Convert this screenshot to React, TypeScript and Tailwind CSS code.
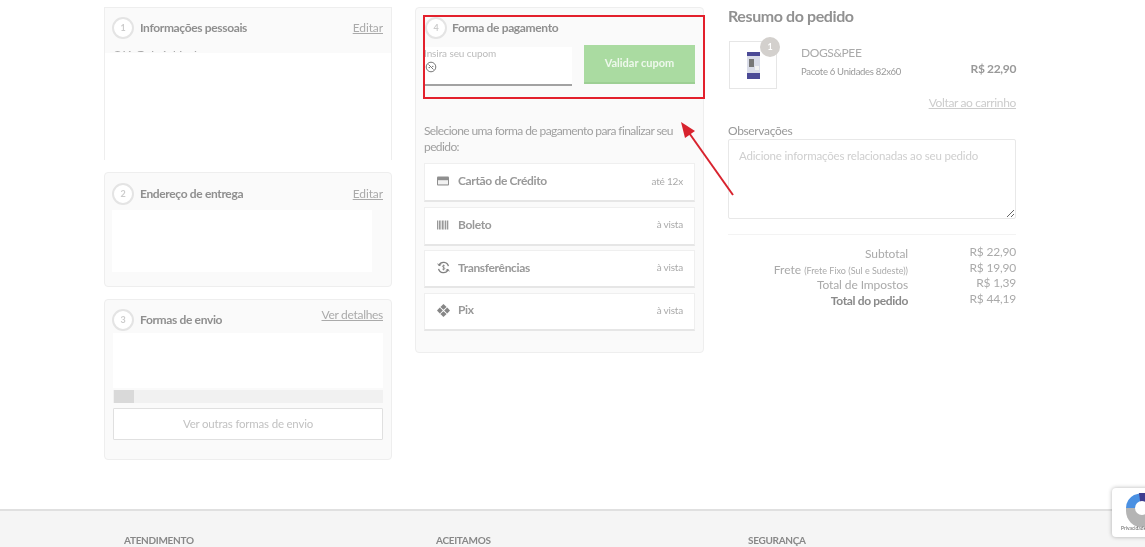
import React from "react";

const Step = ({ n }: { n: number }) => (
  <div className="flex h-[22px] w-[22px] shrink-0 items-center justify-center rounded-full border-2 border-[#e4e4e4] bg-white text-[9px] font-bold text-[#cccccc]">
    {n}
  </div>
);

const CardIcon = () => (
  <svg width="12" height="10" viewBox="0 0 12 10" className="shrink-0">
    <rect x="0" y="0.5" width="12" height="9" rx="1" fill="#8f8f8f" />
    <rect x="1" y="2" width="10" height="1.6" fill="#8f8f8f" />
    <rect x="1" y="4.2" width="10" height="4.2" fill="#f2f2f2" />
  </svg>
);
const BarcodeIcon = () => (
  <svg width="12" height="10" viewBox="0 0 12 10" className="shrink-0">
    {[0, 2, 3.5, 5, 6.5, 8, 10].map((x) => (
      <rect key={x} x={x} y="0.5" width={x === 3.5 || x === 6.5 ? 0.8 : 1.3} height="9" fill="#999" />
    ))}
  </svg>
);
const TransferIcon = () => (
  <svg width="13" height="13" viewBox="0 0 13 13" fill="none" className="shrink-0">
    <path d="M2 4.2A5 5 0 0 1 11.4 5.2M11 8.8A5 5 0 0 1 1.6 7.8" stroke="#808080" strokeWidth="1.3" />
    <path d="M0.8 2.6 2 4.8 4.2 3.6M12.2 10.4 11 8.2 8.8 9.4" stroke="#808080" strokeWidth="1" />
    <path d="M7.8 4.9C7.2 4.2 5.4 4.3 5.4 5.4c0 1.2 2.4.8 2.4 2.1 0 1.1-1.8 1.2-2.5.5M6.6 3.6v5.8" stroke="#808080" strokeWidth=".8" />
  </svg>
);
const PixIcon = () => (
  <svg width="13" height="13" viewBox="0 0 13 13" className="shrink-0">
    <path d="M6.5 0 9.6 3.1 6.5 5.8 3.4 3.1Z" fill="#868686" />
    <path d="M6.5 13 9.6 9.9 6.5 7.2 3.4 9.9Z" fill="#868686" />
    <path d="M2.8 3.6 0 6.5 2.8 9.4 5.8 6.5Z" fill="#868686" />
    <path d="M10.2 3.6 13 6.5 10.2 9.4 7.2 6.5Z" fill="#868686" />
  </svg>
);

const payments = [
  { icon: <CardIcon />, label: "Cartão de Crédito", note: "até 12x", h: "h-[39px]" },
  { icon: <BarcodeIcon />, label: "Boleto", note: "à vista", h: "h-[39px]" },
  { icon: <TransferIcon />, label: "Transferências", note: "à vista", h: "h-[38px]" },
  { icon: <PixIcon />, label: "Pix", note: "à vista", h: "h-[38px]" },
];

const totals = [
  { label: <span className="text-[12px] tracking-[-0.1px]">Subtotal</span>, value: "R$ 22,90" },
  {
    label: (
      <span className="text-[12px]">
        Frete <span className="text-[9px]">(Frete Fixo (Sul e Sudeste))</span>
      </span>
    ),
    value: "R$ 19,90",
  },
  { label: <span className="text-[12px] tracking-[-0.1px]">Total de Impostos</span>, value: "R$ 1,39" },
  { label: <span className="text-[12px] font-bold tracking-[-0.35px] text-[#8a8a8a]">Total do pedido</span>, value: "R$ 44,19" },
];

export default function App() {
  return (
    <div className="relative flex h-[547px] w-[1145px] flex-col overflow-hidden bg-white [font-family:Lato,sans-serif] text-[#999] blur-[0.35px]">
      <main className="flex h-[509px] shrink-0 items-start gap-[23px] pl-[104px] pt-[7px]">
        {/* Column 1 */}
        <div className="flex w-[288px] flex-col gap-3">
          <section className="flex h-[153px] flex-col border-x border-t border-[#eeeeee] bg-white">
            <div className="flex h-[45px] flex-col bg-[#fafafa] px-[7px] pt-[9px]">
              <div className="flex items-center gap-[6px] pr-px">
                <Step n={1} />
                <h2 className="flex-1 text-[12px] font-bold tracking-[-0.35px] text-[#8f8f8f]">Informações pessoais</h2>
                <a className="text-[12px] tracking-[-0.1px] text-[#aaa] underline">Editar</a>
              </div>
              <div className="mt-[8px] h-[5px] overflow-hidden text-[14px] leading-[18px] tracking-[-0.5px] text-[#aaa]">Olá Gabriel Ltda</div>
            </div>
          </section>
          <section className="flex h-[115px] flex-col rounded-sm border border-[#eeeeee] bg-[#fafafa] px-[7px] pt-[10px]">
            <div className="flex items-center gap-[6px] pr-px">
              <Step n={2} />
              <h2 className="-mt-px flex-1 text-[12px] font-bold tracking-[-0.35px] text-[#8f8f8f]">Endereço de entrega</h2>
              <a className="text-[12px] tracking-[-0.1px] text-[#aaa] underline">Editar</a>
            </div>
            <div className="mt-[5px] h-[62px] w-[260px] bg-white" />
          </section>
          <section className="flex h-[161px] flex-col rounded-sm border border-[#eeeeee] bg-[#fafafa] px-2 pt-[9px]">
            <div className="-ml-px flex items-center gap-[6px]">
              <Step n={3} />
              <h2 className="flex-1 text-[12px] font-bold tracking-[-0.35px] text-[#8f8f8f]">Formas de envio</h2>
              <a className="-mt-[10px] text-[12px] tracking-[-0.3px] text-[#aaa] underline">Ver detalhes</a>
            </div>
            <div className="mt-[2px] h-[55px] bg-white" />
            <div className="mt-[2px] flex h-[13px] bg-[#f1f1f1]">
              <div className="ml-px h-full w-5 bg-[#d9d9d9]" />
            </div>
            <button className="mt-[5px] h-[32px] rounded-[1px] border border-[#e0e0e0] bg-white text-[11.5px] tracking-[-0.2px] text-[#c2c2c2]">
              Ver outras formas de envio
            </button>
          </section>
        </div>

        {/* Column 2 */}
        <section className="h-[346px] w-[289px] rounded-sm border border-[#eeeeee] bg-[#fafafa] pl-2 pr-2 pt-[9px]">
          <div className="flex items-center gap-[5px] pl-px">
            <Step n={4} />
            <h2 className="text-[12px] font-bold tracking-[-0.35px] text-[#8f8f8f]">Forma de pagamento</h2>
          </div>
          <div className="mt-[8px] flex items-start gap-3">
            <div className="relative h-[39px] w-[148px] border-b-2 border-[#a2a2a2] bg-white">
              <div className="text-[10px] leading-[12px] tracking-[-0.1px] text-[#bbb]">Insira seu cupom</div>
              <svg width="12" height="12" viewBox="0 0 12 12" fill="none" className="ml-px mt-[2px]">
                <circle cx="6" cy="6" r="4.8" stroke="#777" strokeWidth="1" />
                <path d="M3.5 3.5 8.5 8.5M3.6 6.6h1.4M7 5.4h1.4" stroke="#777" strokeWidth="1" />
              </svg>
            </div>
            <button className="-mt-[2px] h-[39px] w-[111px] border-b-2 border-[#9dcf94] bg-[#aadba1] text-[11px] font-bold text-[#eef8ec]">
              Validar cupom
            </button>
          </div>
          <p className="mt-[37px] w-[272px] text-[12px] leading-[16px] tracking-[-0.6px] text-[#a0a0a0]">
            Selecione uma forma de pagamento para finalizar seu pedido:
          </p>
          <ul className="mt-[8px] flex flex-col gap-[4.5px]">
            {payments.map((p) => (
              <li
                key={p.label}
                className={`flex ${p.h} items-center border border-[#efefef] border-b-2 border-b-[#e6e6e6] bg-white pb-[2px] pl-3 pr-[11px]`}
              >
                <span className="flex w-[21px] shrink-0 items-center">{p.icon}</span>
                <span className="flex-1 text-[12px] font-bold tracking-[-0.35px] text-[#999]">{p.label}</span>
                <span className="text-[10px] tracking-[-0.2px] text-[#aaa]">{p.note}</span>
              </li>
            ))}
          </ul>
        </section>

        {/* Column 3 */}
        <div className="ml-px w-[288px]">
          <h1 className="text-[16px] font-bold leading-[18px] tracking-[-0.4px] text-[#919191]">Resumo do pedido</h1>
          <div className="relative mt-[16px] flex h-[48px] items-start pl-px">
            <div className="relative flex h-[48px] w-[48px] items-center justify-center border border-[#e6e6e6] bg-white">
              <svg width="13" height="27" viewBox="0 0 13 27">
                <rect width="13" height="27" fill="#d9dce8" />
                <rect width="13" height="4" fill="#4b4a96" />
                <rect y="21" width="13" height="6" fill="#4b4a96" />
                <rect x="2" y="7" width="5" height="8" fill="#777" />
                <rect x="8" y="14" width="4" height="4" fill="#f2f2f2" />
              </svg>
              <span className="absolute -right-[4px] -top-[5px] flex h-[20px] w-[20px] items-center justify-center rounded-full bg-[#d3d0cd] text-[9px] font-bold text-white">
                1
              </span>
            </div>
            <div className="ml-[24px] flex-1">
              <div className="mt-[4px] text-[12px] leading-[15px] tracking-[-0.4px] text-[#aaa]">DOGS&amp;PEE</div>
              <div className="mt-[6px] text-[9.5px] leading-[12px] tracking-[-0.3px] text-[#999]">Pacote 6 Unidades 82x60</div>
            </div>
            <div className="mt-[20px] text-[12px] font-bold leading-[15px] tracking-[-0.35px] text-[#999]">R$ 22,90</div>
          </div>
          <div className="mt-[6px] text-right text-[12px] leading-[15px] tracking-[-0.35px] text-[#ccc] underline">Voltar ao carrinho</div>
          <label className="mt-[13px] block text-[12px] leading-[15px] tracking-[-0.35px] text-[#999]">Observações</label>
          <textarea
            readOnly
            placeholder="Adicione informações relacionadas ao seu pedido"
            className="mt-px block h-[80px] w-[288px] rounded-[2px] border border-[#e8e8e8] bg-white px-[10px] py-[9px] text-[11.5px] leading-[14px] tracking-[-0.18px] outline-none placeholder:text-[#cfcfcf]"
          />
          <hr className="mt-[15px] border-t border-[#f3f3f3]" />
          <dl className="mt-[9px] flex flex-col text-[#aaa]">
            {totals.map((t) => (
              <div key={t.value} className="flex h-[15.75px] items-center">
                <dt className="w-[180px] text-right">{t.label}</dt>
                <dd className="flex-1 text-right text-[12px] tracking-[-0.2px]">{t.value}</dd>
              </div>
            ))}
          </dl>
        </div>
      </main>

      <footer className="flex-1 border-t-2 border-[#e0e0e0] bg-[#f5f5f5] pl-[124px] pt-[23px]">
        <div className="flex text-[10px] font-bold uppercase leading-[12px] tracking-[-0.3px] text-[#888]">
          <div className="w-[312px]">Atendimento</div>
          <div className="w-[312px]">Aceitamos</div>
          <div>Segurança</div>
        </div>
      </footer>

      {/* Annotation drawn over the screenshot */}
      <div className="absolute left-[423px] top-[15px] h-[84px] w-[282px] border-[2.5px] border-[#e3202c]" />
      <svg className="absolute left-[670px] top-[110px]" width="75" height="95" viewBox="0 0 75 95" fill="none">
        <path d="M63 85 17 20" stroke="#d8232e" strokeWidth="2" />
        <path d="M11 12 25 21 15 28Z" fill="#d8232e" />
      </svg>

      {/* reCAPTCHA badge */}
      <div className="absolute left-[1112px] top-[488px] h-[49px] w-[40px] overflow-hidden rounded-sm bg-white shadow-[0_0_4px_rgba(0,0,0,0.3)]">
        <svg width="33" height="34" viewBox="0 0 33 34" className="absolute left-[14px] top-[5px]">
          <path d="M0 15A15 15 0 0 1 8 2L15 0V15Z" fill="#4a90e2" />
          <path d="M13 0H33V15H15Z" fill="#3f3d8f" />
          <path d="M0 15H33V18A16 16 0 0 1 0 18Z" fill="#b4b4b4" />
          <circle cx="16" cy="15" r="7" fill="#fff" />
        </svg>
        <div className="absolute left-[9px] top-[37px] whitespace-nowrap text-[5px] text-[#666]">Privacidade - Termos</div>
      </div>
    </div>
  );
}
